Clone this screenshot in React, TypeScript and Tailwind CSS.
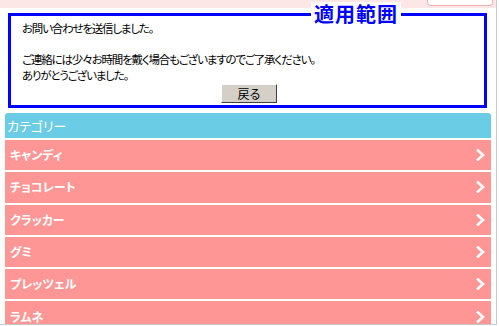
import React from "react";

const items = ["キャンディ", "チョコレート", "クラッカー", "グミ", "プレッツェル", "ラムネ"];

function Chevron() {
  return (
    <svg width="9" height="12" viewBox="0 0 9 12" className="shrink-0">
      <polyline points="2,1.5 7,6 2,10.5" fill="none" stroke="#ffffff" strokeWidth="2.6" strokeLinecap="square" />
    </svg>
  );
}

export default function App() {
  return (
    <div
      className="w-[499px] h-[326px] overflow-hidden bg-white relative [font-feature-settings:'palt']"
      style={{ fontFamily: '"MS PGothic", "Noto Sans CJK JP", sans-serif' }}
    >
      <div className="w-[497px] h-[325px] border-r border-b border-[#c8c8c8] flex flex-col overflow-hidden">
        <div className="h-[8px] bg-[#fde6e6] shrink-0 flex justify-end pr-[3px]">
          <div className="w-[66px] h-[6px] bg-white border border-t-0 border-[#f4b0b0] rounded-b-[4px]" />
        </div>
        <div className="px-[5px] flex flex-col">
          <div className="relative mt-[5px] ml-[3px] mr-[4px] h-[95px] border-[3px] border-[#0000ff] pl-[11px] pt-[5px] text-[11.5px] leading-[15.5px] tracking-[-1.2px] text-black">
            <div className="absolute -top-[14px] left-[300px] bg-white px-[3px] text-[20px] leading-[24px] font-bold text-[#0000ff] tracking-[1px] [font-feature-settings:normal]">
              適用範囲
            </div>
            <p>お問い合わせを送信しました。</p>
            <p>&nbsp;</p>
            <p>ご連絡には少々お時間を戴く場合もございますのでご了承ください。</p>
            <p>ありがとうございました。</p>
            <div className="flex justify-center pr-[8px] mt-[1px] tracking-normal">
              <button className="w-[56px] h-[19px] bg-[#d4d0c8] border border-t-white border-l-white border-r-[#404040] border-b-[#404040] text-[12px] leading-[16px] text-black">
                戻る
              </button>
            </div>
          </div>
          <div className="mt-[5px] h-[25px] bg-[#6bcde5] rounded-t-[3px] flex items-center pl-[2px] text-[13px] text-white">
            カテゴリー
          </div>
          {items.map((t) => (
            <div key={t} className="mt-[1px] border-t border-white">
              <div className="h-[30.3px] bg-[#ff9696] flex items-center justify-between pl-[5px] pr-[6px] text-[12px] font-bold text-white">
                <span>{t}</span>
                <Chevron />
              </div>
            </div>
          ))}
        </div>
      </div>
    </div>
  );
}
